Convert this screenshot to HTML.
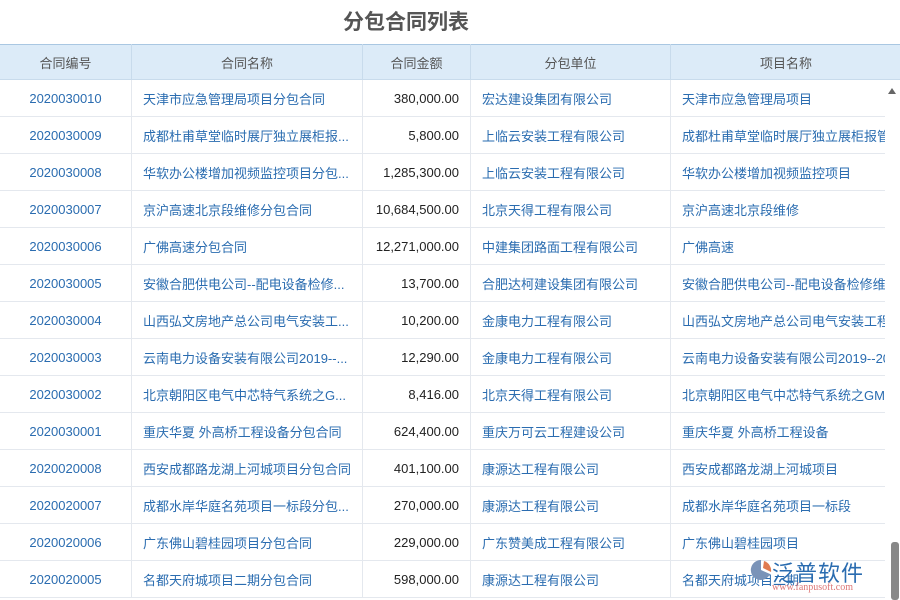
<!DOCTYPE html><html><head><meta charset="utf-8"><style>
body{margin:0;width:900px;height:600px;overflow:hidden;background:#fff;font-family:"Liberation Sans","Noto Sans CJK SC",sans-serif;position:relative}
.t{position:absolute;left:343px;top:6px;font-size:21px;font-weight:bold;color:#555}
table{position:absolute;left:-1px;top:44px;border-collapse:collapse;table-layout:fixed;width:902px}
td,th{height:36px;border:1px solid #e4e8ee;font-size:13px;white-space:nowrap;overflow:hidden;padding:0 11px;font-weight:normal}
th{height:34px;background:#dcebf8;color:#555;text-align:center;border-color:#c8dbec;border-top:1px solid #a9c7e2}
td{color:#2a6cb0}
td.c{text-align:center}td.r{text-align:right;color:#222}
.sb{position:absolute;left:885px;top:81px;width:15px;height:519px;background:#fff}
.up{position:absolute;left:888px;top:88px;width:0;height:0;border-left:4px solid transparent;border-right:4px solid transparent;border-bottom:6px solid #666}
.th{position:absolute;left:891px;top:542px;width:8px;height:58px;background:#888;border-radius:3px}
.logo{position:absolute;left:772px;top:556px;font-size:22px;color:#2a6cb0;letter-spacing:1px}
.url{position:absolute;left:772px;top:582px;font-size:10px;color:#d77;font-family:"Liberation Serif",serif}
</style></head><body>
<div class="t">分包合同列表</div>
<table>
<colgroup><col style="width:132px"><col style="width:231px"><col style="width:108px"><col style="width:200px"><col style="width:231px"></colgroup>
<tr><th>合同编号</th><th>合同名称</th><th>合同金额</th><th>分包单位</th><th>项目名称</th></tr>
<tr><td class="c">2020030010</td><td>天津市应急管理局项目分包合同</td><td class="r">380,000.00</td><td>宏达建设集团有限公司</td><td>天津市应急管理局项目</td></tr>
<tr><td class="c">2020030009</td><td>成都杜甫草堂临时展厅独立展柜报...</td><td class="r">5,800.00</td><td>上临云安装工程有限公司</td><td>成都杜甫草堂临时展厅独立展柜报管</td></tr>
<tr><td class="c">2020030008</td><td>华软办公楼增加视频监控项目分包...</td><td class="r">1,285,300.00</td><td>上临云安装工程有限公司</td><td>华软办公楼增加视频监控项目</td></tr>
<tr><td class="c">2020030007</td><td>京沪高速北京段维修分包合同</td><td class="r">10,684,500.00</td><td>北京天得工程有限公司</td><td>京沪高速北京段维修</td></tr>
<tr><td class="c">2020030006</td><td>广佛高速分包合同</td><td class="r">12,271,000.00</td><td>中建集团路面工程有限公司</td><td>广佛高速</td></tr>
<tr><td class="c">2020030005</td><td>安徽合肥供电公司--配电设备检修...</td><td class="r">13,700.00</td><td>合肥达柯建设集团有限公司</td><td>安徽合肥供电公司--配电设备检修维</td></tr>
<tr><td class="c">2020030004</td><td>山西弘文房地产总公司电气安装工...</td><td class="r">10,200.00</td><td>金康电力工程有限公司</td><td>山西弘文房地产总公司电气安装工程</td></tr>
<tr><td class="c">2020030003</td><td>云南电力设备安装有限公司2019--...</td><td class="r">12,290.00</td><td>金康电力工程有限公司</td><td>云南电力设备安装有限公司2019--20</td></tr>
<tr><td class="c">2020030002</td><td>北京朝阳区电气中芯特气系统之G...</td><td class="r">8,416.00</td><td>北京天得工程有限公司</td><td>北京朝阳区电气中芯特气系统之GM</td></tr>
<tr><td class="c">2020030001</td><td>重庆华夏 外高桥工程设备分包合同</td><td class="r">624,400.00</td><td>重庆万可云工程建设公司</td><td>重庆华夏 外高桥工程设备</td></tr>
<tr><td class="c">2020020008</td><td>西安成都路龙湖上河城项目分包合同</td><td class="r">401,100.00</td><td>康源达工程有限公司</td><td>西安成都路龙湖上河城项目</td></tr>
<tr><td class="c">2020020007</td><td>成都水岸华庭名苑项目一标段分包...</td><td class="r">270,000.00</td><td>康源达工程有限公司</td><td>成都水岸华庭名苑项目一标段</td></tr>
<tr><td class="c">2020020006</td><td>广东佛山碧桂园项目分包合同</td><td class="r">229,000.00</td><td>广东赞美成工程有限公司</td><td>广东佛山碧桂园项目</td></tr>
<tr><td class="c">2020020005</td><td>名都天府城项目二期分包合同</td><td class="r">598,000.00</td><td>康源达工程有限公司</td><td>名都天府城项目二期</td></tr>
</table>
<div class="sb"></div><div class="up"></div><div class="th"></div>
<svg style="position:absolute;left:750px;top:558px" width="22" height="24"><path d="M11 2 A10 10 0 1 0 20 16 L11 12 Z" fill="#7a93b8"/><path d="M13 10 L21 14 A10 10 0 0 0 14 3 Z" fill="#e07a4f"/></svg>
<div class="logo">泛普软件</div>
<div class="url">www.fanpusoft.com</div>
</body></html>
